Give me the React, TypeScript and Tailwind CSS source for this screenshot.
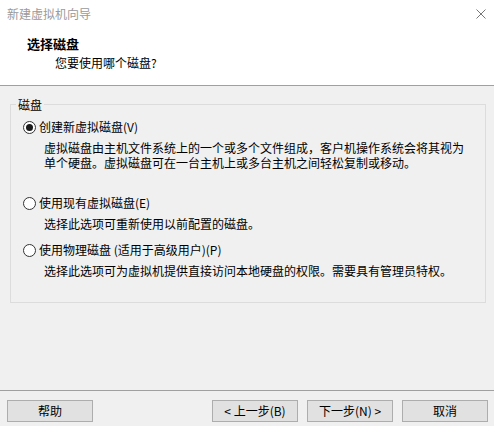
const FONT = "font-['Noto_Sans_CJK_SC','Noto_Sans',sans-serif]";

const OPTIONS = [
  {
    id: 1,
    label: "创建新虚拟磁盘(V)",
    checked: true,
    desc: [
      "虚拟磁盘由主机文件系统上的一个或多个文件组成，客户机操作系统会将其视为",
      "单个硬盘。虚拟磁盘可在一台主机上或多台主机之间轻松复制或移动。",
    ],
  },
  {
    id: 2,
    label: "使用现有虚拟磁盘(E)",
    checked: false,
    desc: ["选择此选项可重新使用以前配置的磁盘。"],
  },
  {
    id: 3,
    label: "使用物理磁盘 (适用于高级用户)(P)",
    checked: false,
    desc: ["选择此选项可为虚拟机提供直接访问本地硬盘的权限。需要具有管理员特权。"],
  },
];

const Radio = ({ checked }: { checked: boolean }) => (
  <span className="w-[13px] h-[13px] rounded-full border border-[#333333] bg-white flex items-center justify-center shrink-0">
    {checked && <span className="w-[7px] h-[7px] rounded-full bg-[#1a1a1a]" />}
  </span>
);

const Button = ({ label }: { label: string }) => (
  <button className="w-[86px] h-[22px] border border-[#adadad] bg-[#e1e1e1] text-[12px] leading-[20px] text-black flex items-center justify-center">
    {label}
  </button>
);

const App = () => {
  return (
    <div className={`w-[494px] h-[426px] bg-[#f0f0f0] flex flex-col overflow-hidden text-black ${FONT}`}>
      <div className="h-[85px] bg-white flex flex-col">
        <div className="h-[28px] flex items-center justify-between pl-[7px] pr-[8px]">
          <span className="text-[12px] leading-[16px] text-[#9a9a9a]">新建虚拟机向导</span>
          <svg width="10" height="10" viewBox="0 0 10 10">
            <path d="M0.5 0.5 L9.5 9.5 M9.5 0.5 L0.5 9.5" stroke="#777" strokeWidth="1" fill="none" />
          </svg>
        </div>
        <div className="pl-[27px] pt-[8px] text-[13px] leading-[16px] font-bold">选择磁盘</div>
        <div className="pl-[55px] mt-[3px] text-[12px] leading-[16px]">您要使用哪个磁盘?</div>
      </div>
      <div className="h-px bg-[#a0a0a0]" />

      <div className="flex-1 flex flex-col">
        <div className="relative ml-[10px] mt-[18px] w-[476px] h-[199px] border border-[#dcdcdc]">
          <span className="absolute left-[5px] top-[-8px] px-[2px] bg-[#f0f0f0] text-[12px] leading-[15px]">磁盘</span>
          <div className="flex flex-col pl-[12px] pt-[14px]">
            {OPTIONS.map((opt) => (
              <div
                key={opt.id}
                className={opt.id === 1 ? "" : opt.id === 2 ? "mt-[25px]" : "mt-[11px]"}
              >
                <div className="flex items-center gap-[3px] h-[16px]">
                  <Radio checked={opt.checked} />
                  <span className="text-[12px] leading-[16px]">{opt.label}</span>
                </div>
                <div className="pl-[21px] mt-[5px] text-[12px] leading-[15px]">
                  {opt.desc.map((line) => (
                    <div key={line} className="h-[15px]">{line}</div>
                  ))}
                </div>
              </div>
            ))}
          </div>
        </div>
      </div>

      <div className="h-px bg-[#a0a0a0]" />
      <div className="h-[35px] flex items-start pt-[9px] pl-[7px] pr-[6px]">
        <Button label="帮助" />
        <div className="ml-auto flex gap-[9px]">
          <Button label="< 上一步(B)" />
          <Button label="下一步(N) >" />
          <Button label="取消" />
        </div>
      </div>
    </div>
  );
};

export default App;
